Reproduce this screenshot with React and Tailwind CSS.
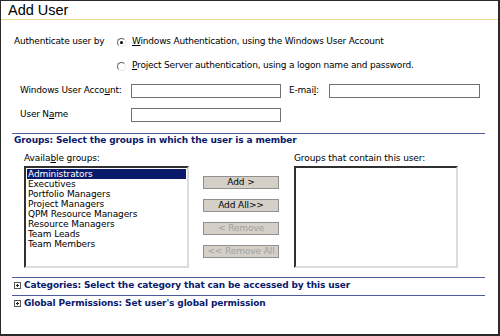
export default function App() {
  const groups = [
    "Administrators",
    "Executives",
    "Portfolio Managers",
    "Project Managers",
    "QPM Resource Managers",
    "Resource Managers",
    "Team Leads",
    "Team Members",
  ];
  const Radio = ({ checked }) => (
    <span className="relative inline-block w-[9px] h-[9px] rounded-full border border-t-[#606060] border-l-[#606060] border-r-[#e8e8e8] border-b-[#e8e8e8] bg-white">
      {checked && <span className="absolute left-[2px] top-[2px] w-[3px] h-[3px] rounded-full bg-black" />}
    </span>
  );
  const Plus = () => (
    <span className="relative inline-block w-[7px] h-[7px] border border-[#555] bg-white mr-[3px]">
      <span className="absolute left-[1px] top-[2px] w-[3px] h-px bg-[#222]" />
      <span className="absolute left-[2px] top-[1px] w-px h-[3px] bg-[#222]" />
    </span>
  );
  const btn = "w-[76px] h-[13px] bg-[#d4d0c8] border border-[#909090] text-[9px] leading-[11px] text-center tracking-[-0.1px]";
  return (
    <div
      className="w-[500px] h-[336px] bg-white border-t border-l border-r-2 border-b-2 border-[#2a2a2a] overflow-hidden text-black"
      style={{ fontFamily: '"DejaVu Sans", Verdana, sans-serif' }}
    >
      <div
        className="h-[19px] border-b border-[#f0d68f] pl-[7px] text-[14.5px] leading-[18px]"
        style={{ fontFamily: '"Liberation Sans", Arial, sans-serif' }}
      >
        Add User
      </div>

      <div className="text-[9px] tracking-[-0.2px]">
        <div className="mt-[14px] h-[16px] flex items-center">
          <span className="ml-[13px] w-[103px]">Authenticate user by</span>
          <Radio checked />
          <span className="ml-[6px]"><u>W</u>indows Authentication, using the Windows User Account</span>
        </div>
        <div className="mt-[8px] h-[16px] flex items-center">
          <span className="ml-[116px]" />
          <Radio />
          <span className="ml-[6px]"><u>P</u>roject Server authentication, using a logon name and password.</span>
        </div>
        <div className="mt-[10px] h-[14px] flex items-center">
          <span className="ml-[19px] w-[111px]">Windows User Acco<u>u</u>nt:</span>
          <span className="w-[150px] h-[14px] border border-[#707070]" />
          <span className="ml-[8px] w-[40px]">E-mai<u>l</u>:</span>
          <span className="w-[151px] h-[14px] border border-[#707070]" />
        </div>
        <div className="mt-[10px] h-[14px] flex items-center">
          <span className="ml-[19px] w-[111px]">User N<u>a</u>me</span>
          <span className="w-[150px] h-[14px] border border-[#707070]" />
        </div>
      </div>

      <div className="mt-[11px] ml-[11px] w-[473px] border-t border-[#4b5b9b]">
        <div className="h-[14px] flex items-center pl-[2px] text-[9px] font-bold text-[#0b1a6b] tracking-[-0.12px]">
          Groups: Select the groups in which the user is a member
        </div>
      </div>

      <div className="mt-[4px] flex text-[9px] tracking-[-0.1px]">
        <div className="ml-[23px] w-[165px]">
          <div className="h-[12px] leading-[12px]">Availa<u>b</u>le groups:</div>
          <div className="mt-[2px] h-[102px] border-2 border-t-[#303030] border-l-[#303030] border-r-[#dcdcdc] border-b-[#dcdcdc] bg-white pt-[1px] px-px">
            {groups.map((g, i) => (
              <div
                key={g}
                className={`h-[10px] leading-[10px] pl-px ${i === 0 ? "bg-[#0a1a6a] text-white" : ""}`}
              >
                {g}
              </div>
            ))}
          </div>
        </div>
        <div className="ml-[14px] mt-[24px] flex flex-col gap-[10px]">
          <div className={btn}>Add &gt;</div>
          <div className={btn}>Add All&gt;&gt;</div>
          <div className={`${btn} text-[#a0a0a0]`}>&lt; Remove</div>
          <div className={`${btn} text-[#a0a0a0]`}>&lt;&lt; Remove All</div>
        </div>
        <div className="ml-[15px] w-[164px]">
          <div className="h-[12px] leading-[12px]">Groups that contain this user:</div>
          <div className="mt-[2px] h-[102px] border-2 border-t-[#303030] border-l-[#303030] border-r-[#dcdcdc] border-b-[#dcdcdc] bg-white" />
        </div>
      </div>

      <div className="mt-[9px] ml-[11px] w-[473px] border-t border-[#4b5b9b]">
        <div className="h-[17px] flex items-center pl-[2px] pb-[2px] text-[9px] font-bold text-[#0b1a6b] tracking-[-0.12px]">
          <Plus />
          Categories: Select the category that can be accessed by this user
        </div>
      </div>
      <div className="ml-[11px] w-[473px] border-t border-[#4b5b9b]">
        <div className="h-[15px] flex items-center pl-[2px] text-[9px] font-bold text-[#0b1a6b] tracking-[-0.12px]">
          <Plus />
          Global Permissions: Set user's global permission
        </div>
      </div>
      <div className="mt-[23px] ml-[7px] w-[486px] h-[2px] bg-[#1a2a8a]" />
    </div>
  );
}
